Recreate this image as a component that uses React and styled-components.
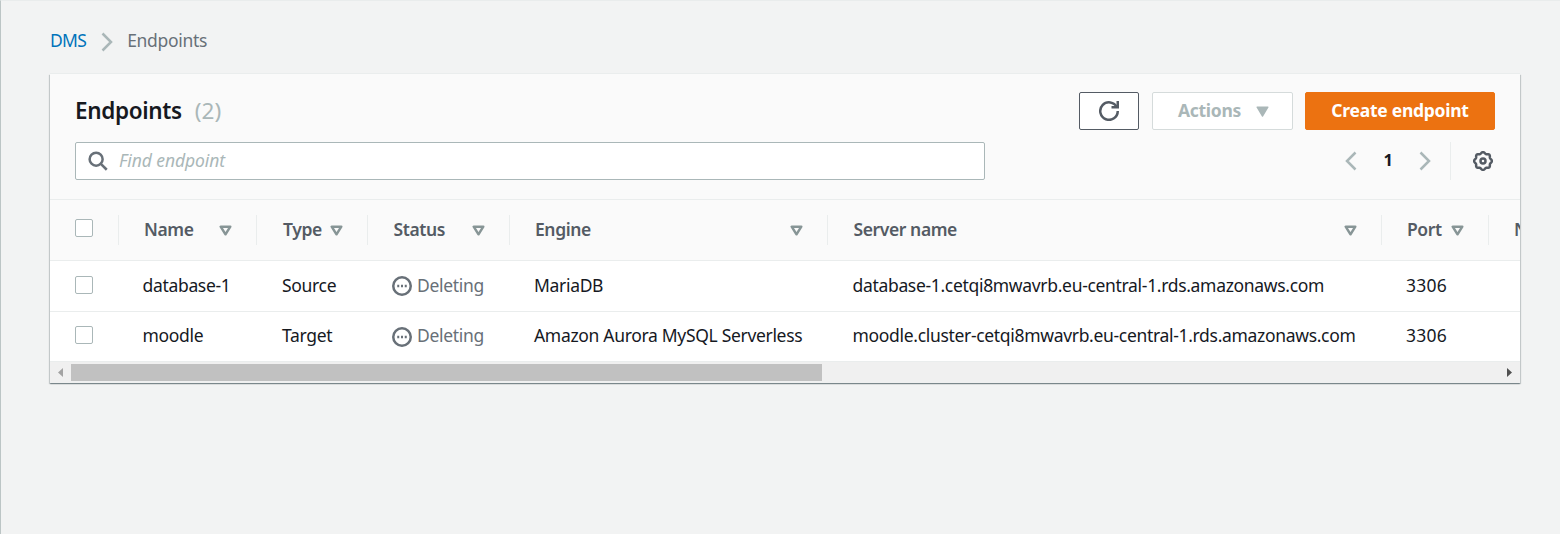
import React from 'react';
import styled, { createGlobalStyle, css } from 'styled-components';

const GlobalStyle = createGlobalStyle`
  * { box-sizing: border-box; }
  body {
    margin: 0;
    background: #f2f3f3;
    color: #16191f;
    font-family: "Noto Sans", "Open Sans", sans-serif;
    font-size: 17.5px;
    letter-spacing: -0.3px;
  }
`;

const Page = styled.main`
  min-height: 534px;
  border-left: 1px solid #bcc5c5;
  border-top: 1px solid #e9ecec;
  padding: 25px 39px 0 49px;
`;

const Breadcrumbs = styled.nav`
  display: flex;
  align-items: center;
  height: 30px;
  color: #687078;
`;

const Crumb = styled.span`
  padding-bottom: 2px;
`;

const CrumbLink = styled.a`
  padding-bottom: 2px;
  color: #0073bb;
  letter-spacing: -0.7px;
`;

const CrumbChevron = styled.svg`
  width: 20px;
  height: 20px;
  margin: 2px 10px 0 11px;
  stroke: #aab7b8;
`;

const Panel = styled.section`
  margin-top: 18px;
  width: 1470px;
  height: 309px;
  display: flex;
  flex-direction: column;
  background: #fff;
  box-shadow: 0 1px 1px 0 rgba(0, 28, 36, 0.3), 1px 1px 1px 0 rgba(0, 28, 36, 0.15),
    -1px 1px 1px 0 rgba(0, 28, 36, 0.15), 0 -1px 0 0 #eaeded;
`;

const PanelHeader = styled.header`
  height: 126px;
  padding: 18px 25px 0;
  background: #fafafa;
  border-bottom: 1px solid #eaeded;
`;

const HeaderRow = styled.div`
  display: flex;
  justify-content: space-between;
  align-items: center;
  height: 38px;
  margin-bottom: 12px;
`;

const Title = styled.h2`
  margin: 0 0 1px;
  font-size: 22.5px;
  font-weight: 600;
  line-height: 30px;
  letter-spacing: -0.35px;
`;

const Count = styled.span`
  margin-left: 13px;
  font-weight: 400;
  letter-spacing: 0.1px;
  color: #aab7b8;
`;

const ButtonGroup = styled.div`
  display: flex;
`;

const variants = {
  normal: css`
    background: #fff;
    border-color: #545b64;
    color: #545b64;
  `,
  disabled: css`
    background: #fff;
    border-color: #d5dbdb;
    color: #aab7b8;
  `,
  primary: css`
    background: #ec7211;
    border-color: #ec7211;
    color: #fff;
  `,
};

const Button = styled.button`
  display: flex;
  align-items: center;
  justify-content: center;
  width: ${p => p.$width}px;
  height: 38px;
  margin-left: ${p => p.$gap || 0}px;
  padding: 0 0 ${p => (p.$iconOnly ? 0 : 3)}px;
  border: 1px solid;
  border-radius: 2px;
  font: 700 17.5px "Noto Sans", sans-serif;
  letter-spacing: -0.27px;
  ${p => variants[p.$variant]}
`;

const Caret = styled.svg`
  width: 13px;
  height: 11px;
  margin: 4px 0 0 15px;
  fill: currentColor;
`;

const ActionsLabel = styled.span`
  display: flex;
  align-items: center;
  padding-left: 2px;
`;

const Icon = styled.svg`
  width: 20px;
  height: 20px;
  flex: none;
  fill: none;
  stroke: ${p => p.$color || '#545b64'};
  stroke-width: ${p => p.$stroke || 2};
`;

const SearchBox = styled.label`
  display: flex;
  align-items: center;
  width: 910px;
  height: 38px;
  padding-left: 12px;
  background: #fff;
  border: 1px solid #aab7b8;
  border-radius: 2px;
`;

const SearchInput = styled.input`
  flex: 1;
  margin-left: 11px;
  padding: 0 0 2px;
  border: 0;
  outline: 0;
  background: transparent;
  font: 17.5px "Noto Sans", sans-serif;
  &::placeholder {
    color: #aab7b8;
    font-style: italic;
    letter-spacing: -0.08px;
  }
`;

const Tools = styled.div`
  display: flex;
  align-items: center;
  height: 38px;
  margin-right: 2px;
`;

const PageNumber = styled.span`
  width: 54px;
  padding-bottom: 3px;
  text-align: center;
  font-weight: 700;
  font-size: 16.5px;
`;

const Divider = styled.span`
  width: 1px;
  height: 38px;
  margin: 0 22px 0 15px;
  background: #eaeded;
`;

const Table = styled.div`
  overflow: hidden;
`;

const Row = styled.div`
  display: grid;
  grid-template-columns: 69px 138px 111px 142px 318px 554px 107px 200px;
  align-items: center;
  height: ${p => p.$height}px;
  background: ${p => (p.$head ? '#fafafa' : '#fff')};
  border-bottom: 1px solid #eaeded;
`;

const CheckCell = styled.div`
  display: flex;
  align-items: center;
  height: 30px;
  padding: 0 0 ${p => p.$lift || 0}px 25px;
  border-right: 1px solid ${p => (p.$head ? '#eaeded' : 'transparent')};
`;

const Checkbox = styled.span`
  width: 18px;
  height: ${p => p.$height || 18}px;
  background: #fff;
  border: 1px solid #aab7b8;
  border-radius: 2px;
`;

const HeadCell = styled.div`
  display: flex;
  align-items: center;
  justify-content: space-between;
  height: 30px;
  padding: 0 24px 3px ${p => p.$indent || 25}px;
  border-right: 1px solid #eaeded;
  color: #545b64;
  font-weight: 600;
  white-space: nowrap;
  letter-spacing: -0.4px;
`;

const SortIcon = styled.svg`
  width: 13px;
  height: 11px;
  margin-top: 3px;
  flex: none;
  fill: none;
  stroke: #879596;
  stroke-width: 2.5;
  stroke-linejoin: round;
`;

const Cell = styled.div`
  padding: 0 0 ${p => p.$lift}px ${p => p.$indent || 24}px;
  white-space: nowrap;
  letter-spacing: ${p => p.$track || '-0.32px'};
`;

const Status = styled.span`
  display: flex;
  align-items: center;
  gap: 5px;
  color: #687078;
`;

const StatusIcon = styled(Icon)`
  margin-top: ${p => p.$drop}px;
`;

const Scrollbar = styled.div`
  display: flex;
  align-items: center;
  flex: 1;
  background: #f0f0f0;
`;

const ScrollArrow = styled.svg`
  width: 21px;
  height: 9px;
  fill: ${p => p.$color};
`;

const Thumb = styled.div`
  width: 751px;
  height: 17px;
  margin-right: auto;
  background: #c1c1c1;
`;

const gearPath =
  Array.from({ length: 97 }, (_, i) => {
    const a = (i / 96) * Math.PI * 2;
    const r = 6.6 + 0.55 * Math.cos(8 * a);
    return `${i ? 'L' : 'M'}${(8 + r * Math.cos(a)).toFixed(2)} ${(8 + r * Math.sin(a)).toFixed(2)}`;
  }).join('') + 'Z';

const columns = [
  { label: 'Name', indent: 25 },
  { label: 'Type', indent: 26 },
  { label: 'Status', indent: 25.5 },
  { label: 'Engine', indent: 25 },
  { label: 'Server name', indent: 25.5 },
  { label: 'Port', indent: 25 },
];

const endpoints = [
  {
    name: 'database-1',
    type: 'Source',
    engine: 'MariaDB',
    server: 'database-1.cetqi8mwavrb.eu-central-1.rds.amazonaws.com',
    port: 3306,
    height: 51,
    lift: 2,
  },
  {
    name: 'moodle',
    type: 'Target',
    engine: 'Amazon Aurora MySQL Serverless',
    server: 'moodle.cluster-cetqi8mwavrb.eu-central-1.rds.amazonaws.com',
    port: 3306,
    height: 50,
    lift: 3,
  },
];

export default function App() {
  return (
    <Page>
      <GlobalStyle />
      <Breadcrumbs>
        <CrumbLink>DMS</CrumbLink>
        <CrumbChevron viewBox="0 0 20 20" fill="none" strokeWidth="2.5">
          <path d="M5.5 1.5 14 10l-8.500 8.500" />
        </CrumbChevron>
        <Crumb>Endpoints</Crumb>
      </Breadcrumbs>

      <Panel>
        <PanelHeader>
          <HeaderRow>
            <Title>
              Endpoints<Count>(2)</Count>
            </Title>
            <ButtonGroup>
              <Button $variant="normal" $width={60} $iconOnly aria-label="Refresh">
                <Icon viewBox="0 0 16 16">
                  <path d="M10 5h5V0" />
                  <path d="M15 8a7 7 0 1 1-.7-3" />
                </Icon>
              </Button>
              <Button $variant="disabled" $width={141} $gap={13}>
                <ActionsLabel>
                  Actions
                  <Caret viewBox="0 0 13 11">
                    <path d="M1 .5h11q1 0 .4 1L7.200 10.200q-.7 1-1.400 0L.6 1.500Q0 .5 1 .5Z" />
                  </Caret>
                </ActionsLabel>
              </Button>
              <Button $variant="primary" $width={190} $gap={12}>
                Create endpoint
              </Button>
            </ButtonGroup>
          </HeaderRow>
          <HeaderRow>
            <SearchBox>
              <Icon viewBox="0 0 16 16" $color="#687078">
                <circle cx="6.500" cy="6.500" r="5.200" />
                <path d="m10.300 10.300 4.700 4.700" />
              </Icon>
              <SearchInput placeholder="Find endpoint" />
            </SearchBox>
            <Tools>
              <Icon viewBox="0 0 20 20" $color="#aab7b8" $stroke={2.5}>
                <path d="M14.500 1.500 6 10l8.500 8.500" />
              </Icon>
              <PageNumber>1</PageNumber>
              <Icon viewBox="0 0 20 20" $color="#aab7b8" $stroke={2.5}>
                <path d="M5.500 1.500 14 10l-8.500 8.500" />
              </Icon>
              <Divider />
              <Icon viewBox="0 0 16 16">
                <path d={gearPath} />
                <circle cx="8" cy="8" r="2" />
              </Icon>
            </Tools>
          </HeaderRow>
        </PanelHeader>

        <Table>
          <Row $head $height={61}>
            <CheckCell $head $lift={5}>
              <Checkbox />
            </CheckCell>
            {columns.map(c => (
              <HeadCell key={c.label} $indent={c.indent}>
                {c.label}
                <SortIcon viewBox="0 0 13 11">
                  <path d="M1.700 1.700h9.600L6.500 9.300Z" />
                </SortIcon>
              </HeadCell>
            ))}
            <HeadCell>N</HeadCell>
          </Row>
          {endpoints.map(e => (
            <Row key={e.name} $height={e.height}>
              <CheckCell $lift={3}>
                <Checkbox />
              </CheckCell>
              <Cell $lift={e.lift} $indent={23.5}>{e.name}</Cell>
              <Cell $lift={e.lift} $indent={25}>{e.type}</Cell>
              <Cell $lift={e.lift}>
                <Status>
                  <StatusIcon viewBox="0 0 16 16" $color="#687078" $drop={e.lift}>
                    <circle cx="8" cy="8" r="7" />
                    <path d="M4.200 8h1.600M7.200 8h1.600M10.200 8h1.600" />
                  </StatusIcon>
                  Deleting
                </Status>
              </Cell>
              <Cell $lift={e.lift}>{e.engine}</Cell>
              <Cell $lift={e.lift} $indent={24.5}>{e.server}</Cell>
              <Cell $lift={e.lift} $track="0.2px">{e.port}</Cell>
            </Row>
          ))}
        </Table>

        <Scrollbar>
          <ScrollArrow viewBox="0 0 21 9" $color="#a3a3a3">
            <path d="M13 0v9L8 4.500Z" />
          </ScrollArrow>
          <Thumb />
          <ScrollArrow viewBox="0 0 21 9" $color="#505050">
            <path d="M8 0v9l5-4.500Z" />
          </ScrollArrow>
        </Scrollbar>
      </Panel>
    </Page>
  );
}
